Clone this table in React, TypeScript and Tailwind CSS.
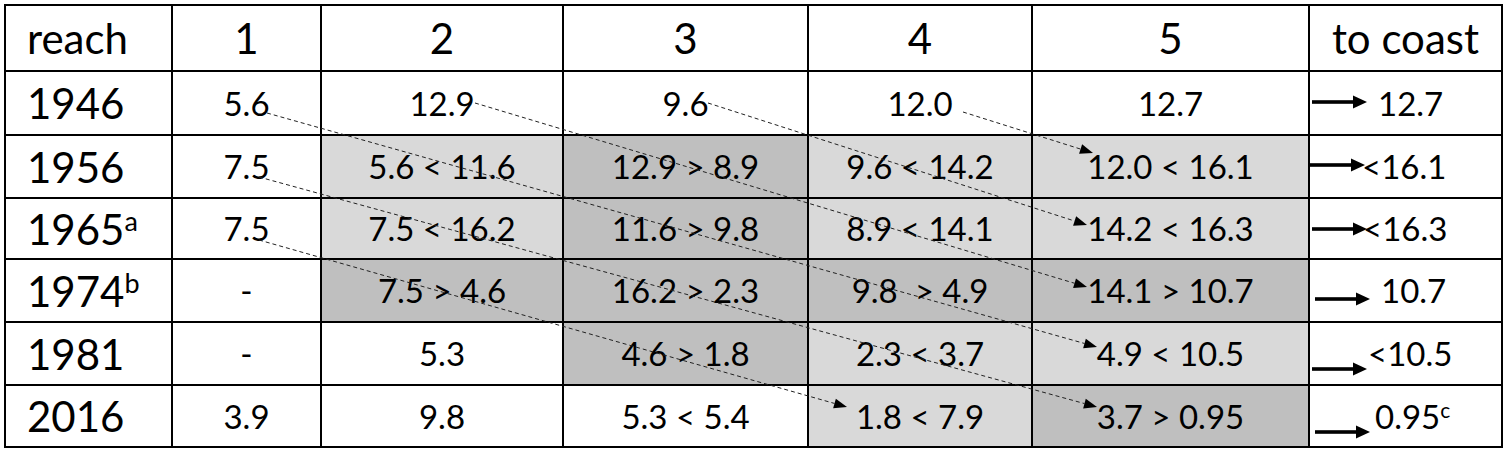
import React from "react";

type Shade = "w" | "l" | "d";
type Cell = { text: string; shade: Shade };

const shadeClass: Record<Shade, string> = {
  w: "bg-white",
  l: "bg-[#d9d9d9]",
  d: "bg-[#bfbfbf]",
};

const header = ["1", "2", "3", "4", "5"];

const rows: { year: string; sup?: string; cells: Cell[] }[] = [
  {
    year: "1946",
    cells: [
      { text: "5.6", shade: "w" },
      { text: "12.9", shade: "w" },
      { text: "9.6", shade: "w" },
      { text: "12.0", shade: "w" },
      { text: "12.7", shade: "w" },
    ],
  },
  {
    year: "1956",
    cells: [
      { text: "7.5", shade: "w" },
      { text: "5.6 < 11.6", shade: "l" },
      { text: "12.9 > 8.9", shade: "d" },
      { text: "9.6 < 14.2", shade: "l" },
      { text: "12.0 < 16.1", shade: "l" },
    ],
  },
  {
    year: "1965",
    sup: "a",
    cells: [
      { text: "7.5", shade: "w" },
      { text: "7.5 < 16.2", shade: "l" },
      { text: "11.6 > 9.8", shade: "d" },
      { text: "8.9 < 14.1", shade: "l" },
      { text: "14.2 < 16.3", shade: "l" },
    ],
  },
  {
    year: "1974",
    sup: "b",
    cells: [
      { text: "-", shade: "w" },
      { text: "7.5 > 4.6", shade: "d" },
      { text: "16.2 > 2.3", shade: "d" },
      { text: "9.8\u00a0 > 4.9", shade: "d" },
      { text: "14.1 > 10.7", shade: "d" },
    ],
  },
  {
    year: "1981",
    cells: [
      { text: "-", shade: "w" },
      { text: "5.3", shade: "w" },
      { text: "4.6 > 1.8", shade: "d" },
      { text: "2.3 < 3.7", shade: "l" },
      { text: "4.9 < 10.5", shade: "l" },
    ],
  },
  {
    year: "2016",
    cells: [
      { text: "3.9", shade: "w" },
      { text: "9.8", shade: "w" },
      { text: "5.3 < 5.4", shade: "w" },
      { text: "1.8 < 7.9", shade: "l" },
      { text: "3.7 > 0.95", shade: "d" },
    ],
  },
];

// "to coast" column: arrow offset and spacing differ per row
const coast = [
  { cls: "pl-[2px]", arrow: "-translate-y-[1px]", gap: "ml-[11px]", text: "12.7" },
  { cls: "pl-0", arrow: "-translate-y-[2px]", gap: "ml-[-3px]", text: "<16.1" },
  { cls: "pl-[2px]", arrow: "translate-y-0", gap: "ml-[-4px]", text: "<16.3" },
  { cls: "pl-[5px]", arrow: "translate-y-[8px]", gap: "ml-[11px]", text: "10.7" },
  { cls: "pl-[2px]", arrow: "translate-y-[15px]", gap: "ml-[1px]", text: "<10.5" },
  { cls: "pl-[5px]", arrow: "translate-y-[16px]", gap: "ml-[5px]", text: "0.95", sup: "c" },
];

// dashed flow arrows, page coordinates: [x1, y1, tipX, tipY]
const flows: [number, number, number, number][] = [
  [963, 112, 1093, 153],
  [708, 103, 1087, 225],
  [475, 103, 1087, 287],
  [267, 113, 1097, 347],
  [259, 177, 1097, 407],
  [259, 240, 847, 407],
];

function SolidArrow({ className }: { className: string }) {
  return (
    <svg width="55" height="14" viewBox="0 0 55 14" className={`shrink-0 ${className}`}>
      <rect x="0" y="5.2" width="43" height="3.6" fill="#000" />
      <polygon points="41,0.5 55,7 41,13.5" fill="#000" />
    </svg>
  );
}

function FlowArrows() {
  return (
    <svg
      width="1509"
      height="453"
      viewBox="0 0 1509 453"
      className="pointer-events-none absolute left-0 top-0"
    >
      {flows.map(([x1, y1, x2, y2], i) => {
        const dx = x2 - x1;
        const dy = y2 - y1;
        const len = Math.hypot(dx, dy);
        const ux = dx / len;
        const uy = dy / len;
        const bx = x2 - ux * 13;
        const by = y2 - uy * 13;
        const nx = -uy * 5;
        const ny = ux * 5;
        return (
          <g key={i}>
            <line
              x1={x1}
              y1={y1}
              x2={bx}
              y2={by}
              stroke="#222"
              strokeWidth="1"
              strokeDasharray="4 3"
            />
            <polygon
              points={`${x2},${y2} ${bx + nx},${by + ny} ${bx - nx},${by - ny}`}
              fill="#000"
            />
          </g>
        );
      })}
    </svg>
  );
}

export default function App() {
  return (
    <div className="relative h-[453px] w-[1509px] bg-white pl-[4px] pt-[4px] font-['Lato',sans-serif] text-black">
      <div className="grid w-fit grid-cols-[165px_147px_240px_243px_222px_275px_191px] grid-rows-[64px_62px_61px_59px_61px_61px_60px] gap-[2px] bg-black p-[2px]">
        {/* header */}
        <div className="flex items-center bg-white pl-[21px] text-[42px] leading-none">reach</div>
        {header.map((h) => (
          <div key={h} className="flex items-center justify-center bg-white text-[42px] leading-none">
            {h}
          </div>
        ))}
        <div className="flex items-center justify-center bg-white text-[42px] leading-none">to coast</div>

        {rows.map((r, ri) => (
          <React.Fragment key={r.year}>
            <div className="flex items-center bg-white pl-[21px] text-[42px] leading-none">
              <span>
                {r.year}
                {r.sup && <sup className="text-[27px]">{r.sup}</sup>}
              </span>
            </div>
            {r.cells.map((c, ci) => (
              <div
                key={ci}
                className={`flex items-center justify-center whitespace-pre text-[33px] leading-none ${shadeClass[c.shade]}`}
              >
                {c.text}
              </div>
            ))}
            <div className={`flex items-center bg-white text-[33px] leading-none ${coast[ri].cls}`}>
              <SolidArrow className={coast[ri].arrow} />
              <span className={coast[ri].gap}>
                {coast[ri].text}
                {coast[ri].sup && <sup className="text-[21px]">{coast[ri].sup}</sup>}
              </span>
            </div>
          </React.Fragment>
        ))}
      </div>
      <FlowArrows />
    </div>
  );
}
